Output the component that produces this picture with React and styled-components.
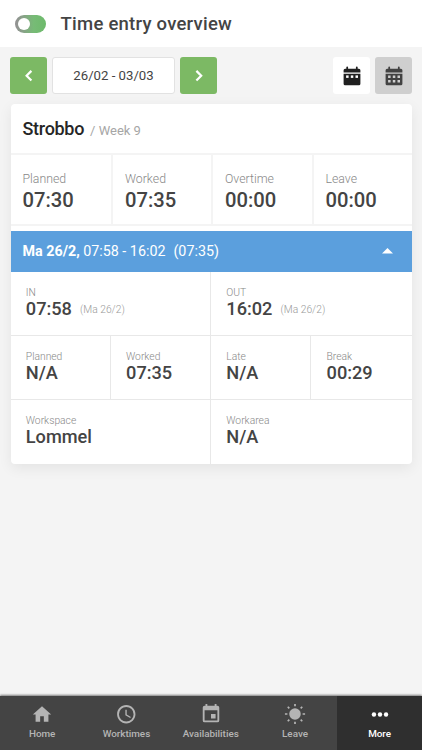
import React from "react";
import styled, { createGlobalStyle } from "styled-components";

const Global = createGlobalStyle`
  *, *::before, *::after { box-sizing: border-box; }
  body { margin: 0; background: #f4f4f4; font-family: Roboto, "Liberation Sans", sans-serif; color: #444; }
  button { font: inherit; border: 0; padding: 0; margin: 0; }
`;

const Screen = styled.div`
  display: flex;
  flex-direction: column;
  width: 422px;
  height: 750px;
  overflow: hidden;
  background: #f4f4f4;
`;

const Header = styled.header`
  display: flex;
  align-items: center;
  flex: none;
  height: 47px;
  padding-left: 15px;
  gap: 14.6px;
  background: #fff;
`;

const Toggle = styled.span`
  display: flex;
  align-items: center;
  width: 31px;
  height: 18px;
  padding-left: 3px;
  border-radius: 9px;
  background: linear-gradient(90deg, #929292 5%, #77bb76 60%, #6dba6b);
`;

const Knob = styled.span`
  width: 12px;
  height: 12px;
  border-radius: 50%;
  background: #fff;
`;

const Title = styled.h1`
  margin: 0;
  font-size: 18.5px;
  line-height: 24px;
  font-weight: 500;
  letter-spacing: 0.24px;
`;

const Toolbar = styled.div`
  display: flex;
  flex: none;
  gap: 5px;
  padding: 10px 10px 0;
  height: 57px;
`;

const SquareButton = styled.button`
  display: flex;
  align-items: center;
  justify-content: center;
  width: 37px;
  height: 37px;
  border-radius: 3px;
  background: ${(p) => p.$bg};
  margin-left: ${(p) => (p.$push ? "auto" : "0")};
`;

const DateRange = styled.div`
  width: 123px;
  height: 37px;
  border: 1px solid #e2e2e2;
  border-radius: 3px;
  background: #fff;
  text-align: center;
  font-size: 13.2px;
  line-height: 36px;
`;

const Card = styled.section`
  flex: none;
  margin: 0 10.5px;
  border-radius: 4px;
  background: #fff;
  box-shadow: 0 4px 14px rgba(0, 0, 0, 0.07);
  overflow: hidden;
`;

const CardHead = styled.div`
  display: flex;
  align-items: baseline;
  height: 49px;
  padding: 12px 12px 0;
  gap: 6px;
`;

const Company = styled.h2`
  margin: 0;
  font-size: 18px;
  line-height: 25px;
  font-weight: 500;
  letter-spacing: -0.3px;
  color: #262626;
`;

const Week = styled.span`
  font-size: 13px;
  color: #a6a6a6;
  vertical-align: 1px;
`;

const Summary = styled.div`
  display: grid;
  grid-template-columns: 102.5px 100px 100.5px 98px;
  height: 73px;
  border: solid #f4f4f4;
  border-width: 2px 0;
`;

const SummaryCell = styled.div`
  padding: 16px 0 0 12px;
  border-right: 2px solid #f4f4f4;
  &:last-child { border-right: 0; }
`;

const SummaryLabel = styled.div`
  font-size: 12.3px;
  line-height: 17px;
  font-weight: 300;
  color: #888;
`;

const SummaryValue = styled.div`
  font-size: 20.2px;
  line-height: 25px;
  font-weight: 500;
`;

const ShiftBar = styled.div`
  display: flex;
  align-items: center;
  justify-content: space-between;
  height: 41px;
  margin-top: 5px;
  padding: 0 19px 1px 12px;
  background: #5b9fdd;
  color: #fff;
  font-size: 14.3px;
`;

const ShiftTotal = styled.span`
  margin-left: 8px;
`;

const ShiftDay = styled.span`
  font-weight: 700;
`;

const DetailRow = styled.div`
  display: grid;
  grid-template-columns: repeat(${(p) => p.$columns}, 1fr);
  height: 64px;
  border-bottom: 1px solid #e8e8e8;
  &:last-child { border-bottom: 0; }
`;

const DetailCell = styled.div`
  padding: 14px 0 0 15.3px;
  border-right: 1px solid #e8e8e8;
  &:last-child { border-right: 0; }
`;

const DetailLabel = styled.div`
  font-size: 10.3px;
  line-height: 13px;
  font-weight: 300;
  color: #888;
`;

const DetailValue = styled.div`
  font-size: 18.2px;
  line-height: 20px;
  font-weight: 500;
`;

const DateNote = styled.span`
  margin-left: 8px;
  font-size: 10.3px;
  font-weight: 300;
  color: #999;
  vertical-align: 2px;
`;

const Nav = styled.nav`
  display: grid;
  grid-template-columns: repeat(4, 84.3px) 1fr;
  flex: none;
  height: 54px;
  margin-top: auto;
  background: #444;
  box-shadow: 0 -1px 2px rgba(0, 0, 0, 0.5);
`;

const NavItem = styled.a`
  display: flex;
  flex-direction: column;
  align-items: center;
  padding-top: 7px;
  color: ${(p) => (p.$active ? "#fff" : "#b4b4b4")};
  background: ${(p) => (p.$active ? "#2f2f2f" : "transparent")};
  font-size: 9.9px;
  font-weight: 500;
  line-height: 14px;
`;

const NavIcon = styled.svg`
  width: 22px;
  height: 22px;
  margin-bottom: 2px;
  fill: currentColor;
`;

const Chevron = ({ next }) => (
  <svg width="37" height="37" viewBox="0 0 37 37" fill="none" stroke="#fff" strokeWidth="2.2">
    <path d={next ? "M16.4 13.9l4.8 4.8-4.8 4.8" : "M21.4 13.9l-4.8 4.8 4.8 4.8"} />
  </svg>
);

const Calendar = ({ color, hole, rows }) => (
  <svg width="18" height="20" viewBox="0 0 18 20">
    <path
      fill={color}
      d="M3.3 1.5q0-.9.9-.9t.9.9v1.3h7.8V1.5q0-.9.9-.9t.9.9v1.3h1.2q1.5 0 1.5 1.5v2.1H.6V4.3q0-1.5 1.5-1.5h1.2zM.6 7.8h16.8v9.9q0 1.5-1.5 1.5H2.1q-1.5 0-1.5-1.5z"
    />
    {rows.map((y) =>
      [3.1, 7.8, 12.5].map((x) => <rect key={`${x}-${y}`} x={x} y={y} width="2.5" height="2.5" fill={hole} />)
    )}
  </svg>
);

const icons = {
  home: <path d="M10 20.5v-6h4v6h5v-8h3l-10-9-10 9h3v8z" />,
  clock: (
    <path
      transform="translate(.3 .3)"
      d="M11.99 2C6.47 2 2 6.48 2 12s4.47 10 9.99 10C17.52 22 22 17.52 22 12S17.52 2 11.99 2zM12 20a8 8 0 110-16 8 8 0 010 16zm.5-13H11v6l5.25 3.15.75-1.23-4.5-2.67z"
    />
  ),
  event: (
    <path d="M17 12h-5v5h5zM16 1v2H8V1H6v2H5a2 2 0 00-2 2v14a2 2 0 002 2h14a2 2 0 002-2V5a2 2 0 00-2-2h-1V1zm3 18H5V8h14z" />
  ),
  sun: (
    <>
      <circle cx="12" cy="12" r="6.3" />
      <path
        d="M12 1v2.5M12 20.5V23M1 12h2.7M20.3 12H23M4.1 4.1l1.7 1.7M18.2 18.2l1.7 1.7M4.1 19.9l1.7-1.7M18.2 5.8l1.7-1.7"
        fill="none"
        stroke="currentColor"
        strokeWidth="1.9"
      />
    </>
  ),
  more: (
    <>
      <circle cx="5.4" cy="12.5" r="2.4" />
      <circle cx="12" cy="12.5" r="2.4" />
      <circle cx="18.6" cy="12.5" r="2.4" />
    </>
  ),
};

const summary = [
  ["Planned", "07:30"],
  ["Worked", "07:35"],
  ["Overtime", "00:00"],
  ["Leave", "00:00"],
];

const details = [
  [["IN", "07:58", "(Ma 26/2)"], ["OUT", "16:02", "(Ma 26/2)"]],
  [["Planned", "N/A"], ["Worked", "07:35"], ["Late", "N/A"], ["Break", "00:29"]],
  [["Workspace", "Lommel"], ["Workarea", "N/A"]],
];

const tabs = [
  ["Home", "home"],
  ["Worktimes", "clock"],
  ["Availabilities", "event"],
  ["Leave", "sun"],
  ["More", "more"],
];

export default function App() {
  return (
    <Screen>
      <Global />
      <Header>
        <Toggle><Knob /></Toggle>
        <Title>Time entry overview</Title>
      </Header>
      <Toolbar>
        <SquareButton $bg="#7cb964" aria-label="Previous week"><Chevron /></SquareButton>
        <DateRange>26/02 - 03/03</DateRange>
        <SquareButton $bg="#7cb964" aria-label="Next week"><Chevron next /></SquareButton>
        <SquareButton $bg="#fff" $push aria-label="Week view">
          <Calendar color="#202020" hole="#fff" rows={[9.4]} />
        </SquareButton>
        <SquareButton $bg="#cfcfcf" aria-label="Month view">
          <Calendar color="#424242" hole="#cfcfcf" rows={[9.5, 14]} />
        </SquareButton>
      </Toolbar>
      <Card>
        <CardHead>
          <Company>Strobbo</Company>
          <Week>/ Week 9</Week>
        </CardHead>
        <Summary>
          {summary.map(([label, value]) => (
            <SummaryCell key={label}>
              <SummaryLabel>{label}</SummaryLabel>
              <SummaryValue>{value}</SummaryValue>
            </SummaryCell>
          ))}
        </Summary>
        <ShiftBar>
          <span>
            <ShiftDay>Ma 26/2,</ShiftDay> 07:58 - 16:02<ShiftTotal>(07:35)</ShiftTotal>
          </span>
          <svg width="11" height="6" viewBox="0 0 11 6"><path d="M0 5.5L5.5 0 11 5.5z" fill="#fff" /></svg>
        </ShiftBar>
        {details.map((cells) => (
          <DetailRow key={cells[0][0]} $columns={cells.length}>
            {cells.map(([label, value, note]) => (
              <DetailCell key={label}>
                <DetailLabel>{label}</DetailLabel>
                <DetailValue>{value}{note && <DateNote>{note}</DateNote>}</DetailValue>
              </DetailCell>
            ))}
          </DetailRow>
        ))}
      </Card>
      <Nav>
        {tabs.map(([label, icon]) => (
          <NavItem key={label} $active={label === "More"}>
            <NavIcon viewBox="0 0 24 24">{icons[icon]}</NavIcon>
            {label}
          </NavItem>
        ))}
      </Nav>
    </Screen>
  );
}
